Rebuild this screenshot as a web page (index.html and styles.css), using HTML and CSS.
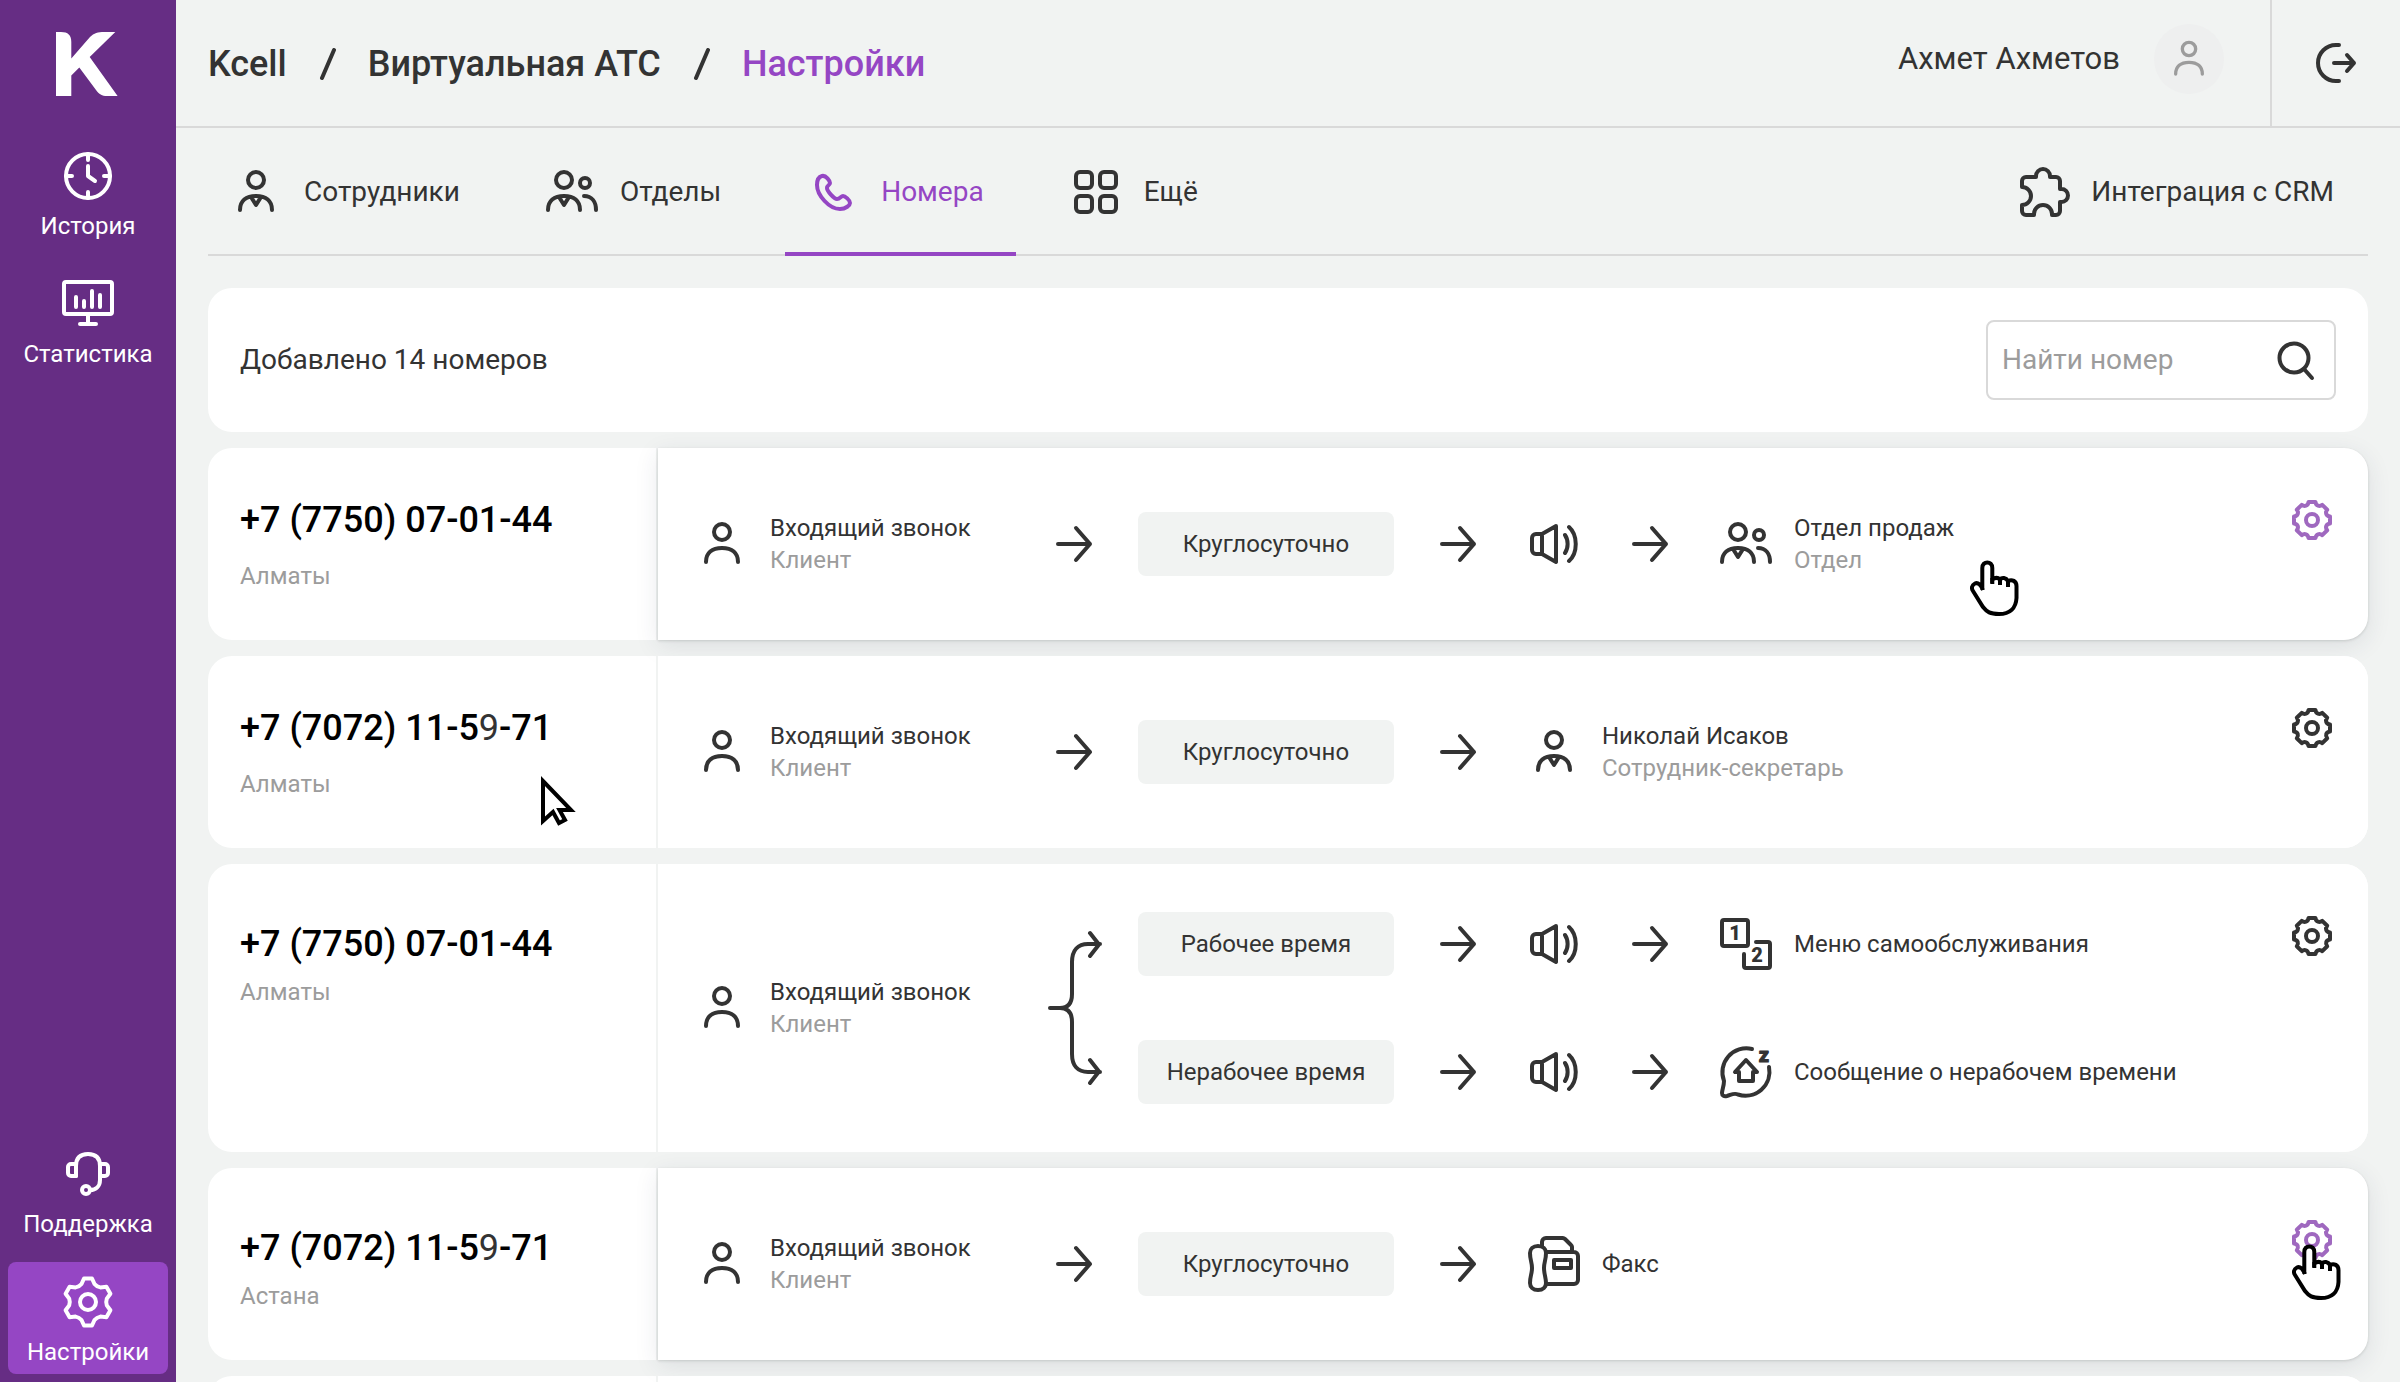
FILE: index.html
```html
<!DOCTYPE html>
<html lang="ru">
<head>
<meta charset="utf-8">
<meta name="viewport" content="width=device-width, initial-scale=1">
<title>Kcell — Виртуальная АТС</title>
<link rel="stylesheet" href="styles.css">
</head>
<body>
<svg class="sprite" aria-hidden="true">
  <symbol id="i-clock" viewBox="0 0 48 48"><circle cx="24" cy="24" r="22"/><path d="M24 2v6M24 40v6M2 24h6M40 24h6M24 14v10l7 5"/></symbol>
  <symbol id="i-stats" viewBox="0 2 56 56"><rect x="4" y="8" width="48" height="32" rx="2"/><path d="M28 40v10M20 50h16M16 23v10M24 27v6M32 17v16M40 21v12"/></symbol>
  <symbol id="i-headset" viewBox="0 0 56 56"><path d="M16 30V20C16 12 20 8 28 8s12 4 12 12v14c0 6-4 10-10 10"/><path d="M16 18h-5a3 3 0 0 0-3 3v6a3 3 0 0 0 3 3h5M40 18h5a3 3 0 0 1 3 3v6a3 3 0 0 1-3 3h-5"/><circle cx="26" cy="44" r="4"/></symbol>
  <symbol id="i-cog" viewBox="-28 -28 56 56"><path d="M-4 -23.5H4L6.5 -18Q8.8 -15.2 12.3 -14.6L18.4 -15.2L22.4 -8.3L18.8 -3.4Q17.6 0 18.8 3.4L22.4 8.3L18.4 15.2L12.3 14.6Q8.8 15.2 6.5 18L4 23.5H-4L-6.5 18Q-8.8 15.2 -12.3 14.6L-18.4 15.2L-22.4 8.3L-18.8 3.4Q-17.6 0 -18.8 -3.4L-22.4 -8.3L-18.4 -15.2L-12.3 -14.6Q-8.8 -15.2 -6.5 -18Z"/><circle r="8"/></symbol>
  <symbol id="i-gear" viewBox="-24 -24 48 48"><path d="M-3.5 -18H3.5C4 -14 7.5 -13 10.25 -15.2L15.2 -10.25C13 -7.5 14 -4 18 -3.5V3.5C14 4 13 7.5 15.2 10.25L10.25 15.2C7.5 13 4 14 3.5 18H-3.5C-4 14 -7.5 13 -10.25 15.2L-15.2 10.25C-13 7.5 -14 4 -18 3.5V-3.5C-14 -4 -13 -7.5 -15.2 -10.25L-10.25 -15.2C-7.5 -13 -4 -14 -3.5 -18Z"/><circle r="6"/></symbol>
  <symbol id="i-person" viewBox="0 0 48 48"><circle cx="24" cy="12" r="8"/><path d="M8 42c0-9 6-14 16-14s16 5 16 14"/></symbol>
  <symbol id="i-employee" viewBox="0 0 48 48"><circle cx="24" cy="12" r="8"/><path d="M8 42c0-9 6-14 16-14s16 5 16 14M19 29l5 8 5-8"/></symbol>
  <symbol id="i-group" viewBox="-2 0 52 48"><circle cx="16" cy="12" r="8"/><path d="M0 42c0-9 6-14 16-14s16 5 16 14M11 29l5 8 5-8"/><circle cx="37" cy="15" r="5"/><path d="M36 28c8 0 12 6 12 14"/></symbol>
  <symbol id="i-phone" viewBox="0 0 48 48"><path d="M13 8C9 9 8 13 8 17C8 27 20 41 31 41C37 41 41 37 41 35C41 32 36 28 34 28C32 28 31 31 28 31C25 31 18 23 18 20C18 17 21 17 21 15C21 13 17 7 13 8Z"/></symbol>
  <symbol id="i-grid" viewBox="0 0 48 48"><rect x="4" y="4" width="16" height="16" rx="4"/><rect x="28" y="4" width="16" height="16" rx="4"/><rect x="4" y="28" width="16" height="16" rx="4"/><rect x="28" y="28" width="16" height="16" rx="4"/></symbol>
  <symbol id="i-puzzle" viewBox="0 0 52 52"><path d="M3 21V15a4 4 0 0 1 4-4H17V10a7 7 0 0 1 14 0V11H37a4 4 0 0 1 4 4V23H42.5a6.5 6.5 0 0 1 0 13H41V45a4 4 0 0 1-4 4H33V48a9 9 0 0 0-18 0V49H7a4 4 0 0 1-4-4V39a9 9 0 0 0 0-18Z"/></symbol>
  <symbol id="i-exit" viewBox="0 0 48 48"><path d="M27 6H24a18 18 0 0 0 0 36H27M22 24H42M35 16L42 24L35 32"/></symbol>
  <symbol id="i-search" viewBox="0 0 48 48"><circle cx="22" cy="22" r="14.5"/><path d="M32 33l8 9"/></symbol>
  <symbol id="i-arrow" viewBox="0 0 48 48"><path d="M8 24H40M26 8L40 24L26 40"/></symbol>
  <symbol id="i-sound" viewBox="0 0 48 48"><path d="M12 14H6a4 4 0 0 0-4 4V30a4 4 0 0 0 4 4H12M12 14V34L26 42V6ZM35 15C38.5 20 38.5 28 35 33M39 7C48 15 48 33 39 41"/></symbol>
  <symbol id="i-fax" viewBox="0 0 52 56"><path d="M10 10C15 10 18 13 18 17C18 24 16 26 16 32C16 38 18 42 18 47C18 51 15 54 10 54C5 54 2 51 2 47C2 40 4 38 4 32C4 26 2 24 2 17C2 13 5 10 10 10ZM18 16H46a4 4 0 0 1 4 4V44a4 4 0 0 1-4 4H18M14 10V6a4 4 0 0 1 4-4H34a4 4 0 0 1 3 1L43 9a3 3 0 0 1 1 2V16M26 24H43V32H26Z"/></symbol>
  <symbol id="i-split" viewBox="0 0 96 192"><path d="M24 96H34C42 96 46 91 46 82V50C46 38 52 32 62 32H74M34 96C42 96 46 101 46 110V142C46 154 52 160 62 160H74M64 21L73 32.5L64 44M64 148L73 159.5L64 171"/></symbol>
  <symbol id="i-hand" viewBox="0 0 49 56"><path d="M13 30C11 25 8 22 5 23.5C2 25 1 28 3 31L13 47C17 52 20 54 29 54C40 54 46 48 46.5 38V26C46.5 21 42 19 38 21C36 17.5 32 17 30 19.5C28 17.5 25 17.5 22.3 19.5V8C22.3 0.5 12.3 0.5 12.3 8V30"/><path d="M22.3 18V24M30 19V25M38 21V27"/></symbol>
  <symbol id="i-pointer" viewBox="0 0 36 52"><path d="M2 5V45L12 36L18 47L24 44L18.5 34H30Z"/></symbol>
</svg>

<div class="app">
  <aside class="sidebar">
    <a class="logo" href="#" aria-label="Kcell">
      <svg width="62" height="64" viewBox="0 0 62 64"><path d="M0 0H5C12 0 15.3 3 15.3 10V26.5L34 5C38 1 42 0 48 0H59.3L33.7 25L61.6 64H51C46 64 43 62 40 58L23.3 35.6L15.3 43.5V64H0Z"/></svg>
    </a>
    <nav class="side-nav">
      <a class="side-link" href="#"><span class="side-icon"><svg class="icon"><use href="#i-clock"/></svg></span>История</a>
      <a class="side-link" href="#"><span class="side-icon"><svg class="icon icon-56"><use href="#i-stats"/></svg></span>Статистика</a>
      <a class="side-link side-link-support" href="#"><span class="side-icon"><svg class="icon icon-56"><use href="#i-headset"/></svg></span>Поддержка</a>
      <a class="side-link side-link-active" href="#" aria-current="page"><span class="side-icon"><svg class="icon icon-56"><use href="#i-cog"/></svg></span>Настройки</a>
    </nav>
  </aside>

  <div class="page">
    <header class="topbar">
      <nav class="crumbs" aria-label="Навигация">
        <a href="#">Kcell</a>
        <svg class="slash" viewBox="0 0 17 32"><path d="M3 30L15 2"/></svg>
        <a href="#">Виртуальная АТС</a>
        <svg class="slash" viewBox="0 0 17 32"><path d="M3 30L15 2"/></svg>
        <a class="current" href="#" aria-current="page">Настройки</a>
      </nav>
      <div class="user">
        <span class="user-name">Ахмет Ахметов</span>
        <span class="avatar"><svg class="icon icon-40"><use href="#i-person"/></svg></span>
      </div>
      <button class="exit" type="button" aria-label="Выйти"><svg class="icon"><use href="#i-exit"/></svg></button>
    </header>

    <main class="content">
      <nav class="tabs">
        <a class="tab" href="#"><svg class="icon"><use href="#i-employee"/></svg>Сотрудники</a>
        <a class="tab" href="#"><svg class="icon icon-group"><use href="#i-group"/></svg>Отделы</a>
        <a class="tab tab-active" href="#" aria-current="page"><svg class="icon"><use href="#i-phone"/></svg>Номера</a>
        <a class="tab" href="#"><svg class="icon"><use href="#i-grid"/></svg>Ещё</a>
        <a class="tab tab-crm" href="#"><svg class="icon icon-52"><use href="#i-puzzle"/></svg>Интеграция с CRM</a>
      </nav>

      <section class="summary">
        <p class="summary-text">Добавлено 14 номеров</p>
        <form class="search">
          <input class="search-input" type="search" aria-label="Найти номер" placeholder="Найти номер">
          <button class="icon-button" type="submit" aria-label="Искать"><svg class="icon"><use href="#i-search"/></svg></button>
        </form>
      </section>

      <ul class="numbers">
        <li class="row">
          <div class="line">
            <span class="phone">+7 (7750) 07-01-44</span>
            <span class="city">Алматы</span>
          </div>
          <div class="flow flow-raised">
            <div class="caller">
              <span class="step"><svg class="icon"><use href="#i-person"/></svg></span>
              <p class="label">Входящий звонок<span class="note">Клиент</span></p>
            </div>
            <span class="step"><svg class="icon"><use href="#i-arrow"/></svg></span>
            <div class="routes">
              <div class="route">
                <span class="chip">Круглосуточно</span>
                <span class="step"><svg class="icon"><use href="#i-arrow"/></svg></span>
                <span class="step"><svg class="icon"><use href="#i-sound"/></svg></span>
                <span class="step"><svg class="icon"><use href="#i-arrow"/></svg></span>
                <span class="step"><svg class="icon icon-group"><use href="#i-group"/></svg></span>
                <p class="label">Отдел продаж<span class="note">Отдел</span></p>
              </div>
            </div>
            <button class="icon-button setup setup-hover" type="button" aria-label="Настроить"><svg class="icon"><use href="#i-gear"/></svg></button>
            <svg class="cursor cursor-hand cursor-flow"><use href="#i-hand"/></svg>
          </div>
        </li>

        <li class="row">
          <div class="line">
            <span class="phone">+7 (7072) 11-5<span class="digit">9</span>-71</span>
            <span class="city">Алматы</span>
            <svg class="cursor cursor-pointer"><use href="#i-pointer"/></svg>
          </div>
          <div class="flow">
            <div class="caller">
              <span class="step"><svg class="icon"><use href="#i-person"/></svg></span>
              <p class="label">Входящий звонок<span class="note">Клиент</span></p>
            </div>
            <span class="step"><svg class="icon"><use href="#i-arrow"/></svg></span>
            <div class="routes">
              <div class="route">
                <span class="chip">Круглосуточно</span>
                <span class="step"><svg class="icon"><use href="#i-arrow"/></svg></span>
                <span class="step"><svg class="icon"><use href="#i-employee"/></svg></span>
                <p class="label">Николай Исаков<span class="note">Сотрудник-секретарь</span></p>
              </div>
            </div>
            <button class="icon-button setup" type="button" aria-label="Настроить"><svg class="icon"><use href="#i-gear"/></svg></button>
          </div>
        </li>

        <li class="row">
          <div class="line line-tight">
            <span class="phone">+7 (7750) 07-01-44</span>
            <span class="city">Алматы</span>
          </div>
          <div class="flow">
            <div class="caller">
              <span class="step"><svg class="icon"><use href="#i-person"/></svg></span>
              <p class="label">Входящий звонок<span class="note">Клиент</span></p>
            </div>
            <svg class="icon icon-split"><use href="#i-split"/></svg>
            <div class="routes">
              <div class="route">
                <span class="chip">Рабочее время</span>
                <span class="step"><svg class="icon"><use href="#i-arrow"/></svg></span>
                <span class="step"><svg class="icon"><use href="#i-sound"/></svg></span>
                <span class="step"><svg class="icon"><use href="#i-arrow"/></svg></span>
                <span class="step">
                  <svg class="icon icon-52" viewBox="-2 -2 52 52"><rect width="26" height="26" rx="2"/><path d="M34 22H46a2 2 0 0 1 2 2V46a2 2 0 0 1-2 2H24a2 2 0 0 1-2-2V34"/><text x="13" y="20">1</text><text x="35" y="42">2</text></svg>
                </span>
                <p class="label">Меню самообслуживания</p>
              </div>
              <div class="route">
                <span class="chip">Нерабочее время</span>
                <span class="step"><svg class="icon"><use href="#i-arrow"/></svg></span>
                <span class="step"><svg class="icon"><use href="#i-sound"/></svg></span>
                <span class="step"><svg class="icon"><use href="#i-arrow"/></svg></span>
                <span class="step">
                  <svg class="icon icon-52" viewBox="-2 -2 52 52"><path d="M30 1A24 24 0 0 0 2 33C2 38 0 42 0 45C0 48 2 48.5 5 48C9 47 12 44.5 16 46.5A24 24 0 0 0 47 19M24 12L13 24H17V33H31V24H35Z"/><text class="sleep" x="42" y="14">z</text></svg>
                </span>
                <p class="label">Сообщение о нерабочем времени</p>
              </div>
            </div>
            <button class="icon-button setup" type="button" aria-label="Настроить"><svg class="icon"><use href="#i-gear"/></svg></button>
          </div>
        </li>

        <li class="row">
          <div class="line line-tight">
            <span class="phone">+7 (7072) 11-5<span class="digit">9</span>-71</span>
            <span class="city">Астана</span>
          </div>
          <div class="flow flow-raised">
            <div class="caller">
              <span class="step"><svg class="icon"><use href="#i-person"/></svg></span>
              <p class="label">Входящий звонок<span class="note">Клиент</span></p>
            </div>
            <span class="step"><svg class="icon"><use href="#i-arrow"/></svg></span>
            <div class="routes">
              <div class="route">
                <span class="chip">Круглосуточно</span>
                <span class="step"><svg class="icon"><use href="#i-arrow"/></svg></span>
                <span class="step"><svg class="icon icon-fax"><use href="#i-fax"/></svg></span>
                <p class="label">Факс</p>
              </div>
            </div>
            <button class="icon-button setup setup-hover" type="button" aria-label="Настроить"><svg class="icon"><use href="#i-gear"/></svg></button>
            <svg class="cursor cursor-hand cursor-setup"><use href="#i-hand"/></svg>
          </div>
        </li>

        <li class="row">
          <div class="line"></div>
          <div class="flow"></div>
        </li>
      </ul>
    </main>
  </div>
</div>
</body>
</html>
```
FILE: styles.css
```css
:root {
  --bg: #f1f3f2;
  --ink: #333333;
  --muted: #9c9c9c;
  --line: #d9d9d9;
  --brand: #662d84;
  --accent: #9546c4;
}

* { box-sizing: border-box; }

body {
  margin: 0;
  background: var(--bg);
  color: var(--ink);
  font: 24px/32px Roboto, "Open Sans", sans-serif;
}

a { color: inherit; text-decoration: none; }
p { margin: 0; }

button {
  padding: 0;
  border: 0;
  background: none;
  color: inherit;
  font: inherit;
  cursor: pointer;
}

/* Icons */
.sprite { position: absolute; width: 0; height: 0; }

.icon {
  display: block;
  flex: none;
  width: 48px;
  height: 48px;
  fill: none;
  stroke: currentColor;
  stroke-width: 4px;
  stroke-linecap: round;
  stroke-linejoin: round;
  overflow: visible;
}

.icon-40 { width: 40px; height: 40px; }
.icon-52 { width: 52px; height: 52px; }
.icon-56 { width: 56px; height: 56px; }
.icon-group { width: 52px; }
.icon-fax { width: 52px; height: 56px; }
.icon-split { width: 96px; height: 192px; }

.icon text {
  fill: currentColor;
  stroke: none;
  font: 900 20px/20px Roboto, sans-serif;
  text-anchor: middle;
}

.icon .sleep { stroke: currentColor; stroke-width: 1px; }

/* Layout */
.app { display: flex; height: 100vh; }

.sidebar {
  display: flex;
  flex: none;
  flex-direction: column;
  width: 176px;
  background: var(--brand);
  color: #ffffff;
}

.logo { padding: 32px 56px 40px; fill: #ffffff; }
.logo svg { display: block; }

.side-nav {
  display: flex;
  flex: 1;
  flex-direction: column;
  gap: 16px;
  padding: 0 8px 8px;
}

.side-link {
  padding: 12px 0 8px;
  border-radius: 8px;
  line-height: 28px;
  text-align: center;
}

.side-icon {
  display: grid;
  place-items: center;
  height: 56px;
  margin-bottom: 8px;
}

.side-link-support { margin-top: auto; }
.side-link-active { background: var(--accent); }

.page {
  display: flex;
  flex: 1;
  flex-direction: column;
  min-width: 0;
}

/* Top bar */
.topbar {
  display: flex;
  flex: none;
  align-items: stretch;
  height: 128px;
  border-bottom: 2px solid var(--line);
}

.crumbs {
  display: flex;
  flex: 1;
  align-items: center;
  gap: 32px;
  padding: 2px 0 0 32px;
  font-size: 36px;
  font-weight: 500;
  line-height: 40px;
}

.slash {
  width: 17px;
  height: 32px;
  fill: none;
  stroke: currentColor;
  stroke-width: 4px;
  stroke-linecap: round;
}

.current { color: var(--accent); }

.user {
  display: flex;
  align-items: center;
  gap: 34px;
  padding: 0 46px 8px 0;
}

.user-name { font-size: 31px; line-height: 36px; }

.avatar {
  display: grid;
  place-items: center;
  width: 70px;
  height: 70px;
  border-radius: 50%;
  background: #eeefef;
  color: var(--muted);
}

.exit {
  display: grid;
  place-items: center;
  width: 130px;
  border-left: 2px solid var(--line);
}

/* Content */
.content {
  flex: 1;
  min-height: 0;
  padding: 0 32px;
  overflow-y: auto;
  scrollbar-width: none;
}

.tabs {
  display: flex;
  gap: 32px;
  height: 128px;
  border-bottom: 2px solid var(--line);
  font-size: 28px;
}

.tab {
  display: flex;
  align-items: center;
  gap: 24px;
  margin-bottom: -2px;
  padding: 4px 32px 0 24px;
  border-bottom: 4px solid transparent;
}

.tab .icon-group { margin: 0 -2px; }
.tab .icon-52 { margin-right: -4px; }
.tab-active { border-color: var(--accent); color: var(--accent); }
.tab-crm { margin-left: auto; padding-right: 34px; }

.summary {
  display: flex;
  align-items: center;
  justify-content: space-between;
  margin-top: 32px;
  padding: 32px;
  border-radius: 24px;
  background: #ffffff;
  font-size: 28px;
}

.search {
  display: flex;
  align-items: center;
  width: 350px;
  height: 80px;
  padding: 0 14px;
  border: 2px solid var(--line);
  border-radius: 8px;
}

.search-input {
  flex: 1;
  min-width: 0;
  padding: 0;
  border: 0;
  outline: 0;
  background: none;
  color: inherit;
  font: inherit;
  appearance: none;
}

.search-input::placeholder { color: var(--muted); opacity: 1; }

/* Numbers */
.numbers {
  display: grid;
  gap: 16px;
  margin: 16px 0 32px;
  padding: 0;
  list-style: none;
}

.row {
  display: flex;
  min-height: 192px;
  border-radius: 24px;
  background: #ffffff;
}

.line {
  position: relative;
  display: flex;
  flex: none;
  flex-direction: column;
  gap: 22px;
  width: 450px;
  padding: 52px 32px 0;
  border-right: 2px solid var(--bg);
}

.line-tight { gap: 14px; padding-top: 60px; }

.phone {
  color: #000000;
  font-size: 36px;
  font-weight: 500;
  line-height: 40px;
}

.digit { color: var(--ink); font-weight: 400; }
.city { color: var(--muted); line-height: 28px; }

.flow {
  position: relative;
  display: flex;
  flex: 1;
  align-items: center;
  padding: 48px 32px 48px 16px;
  border-radius: 0 24px 24px 0;
  background: #ffffff;
}

.flow-raised {
  box-shadow: 0 6px 24px rgba(40, 50, 80, 0.1), 0 1px 3px rgba(0, 20, 10, 0.14);
}

.caller {
  display: flex;
  align-items: center;
  width: 352px;
}

.step {
  display: grid;
  flex: none;
  place-items: center;
  width: 96px;
}

.label { white-space: nowrap; }
.note { display: block; color: var(--muted); }

.routes { display: grid; flex: 1; gap: 64px; }
.route { display: flex; align-items: center; height: 64px; }

.chip {
  flex: none;
  width: 256px;
  margin: 0 16px;
  padding: 16px 0;
  border-radius: 8px;
  background: var(--bg);
  text-align: center;
}

.icon-button { width: 48px; height: 48px; }
.setup { align-self: flex-start; }
.setup-hover { color: #9f68bf; }

/* Mouse pointers shown over the rows */
.cursor {
  position: absolute;
  fill: #ffffff;
  stroke: #000000;
  stroke-width: 4px;
}

.cursor-hand { width: 49px; height: 56px; }
.cursor-flow { top: 112px; right: 349px; }
.cursor-setup { top: 76px; right: 27px; }
.cursor-pointer { top: 120px; left: 333px; width: 36px; height: 52px; }
```
